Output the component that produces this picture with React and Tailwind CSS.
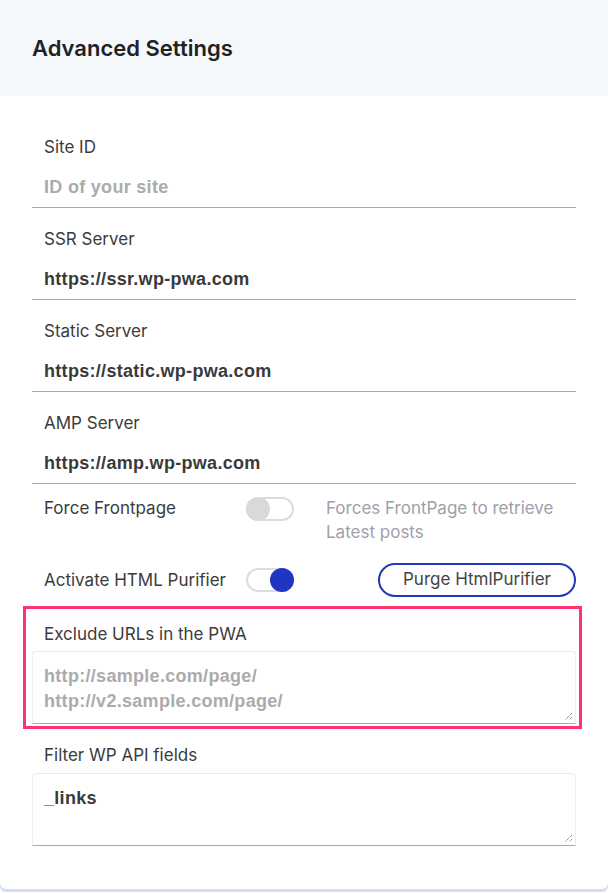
import React from "react";

const labelCls = "block text-[17px] leading-6 text-[#3b3b3b]";
const monoish = "font-['Liberation_Sans',Arial,sans-serif] font-bold text-[18px] tracking-[0.3px]";

function TextField({ label, value, placeholder }) {
  return (
    <div className="pt-[19px] border-b border-[#a8a8a8]">
      <div className="pl-3">
        <span className={labelCls}>{label}</span>
      </div>
      <div className={"pl-3 pt-4 pb-2 leading-6 " + monoish + " " + (value ? "text-[#3a3a3a]" : "text-[#ababab]")}>
        {value || placeholder}
      </div>
    </div>
  );
}

function Toggle({ on }) {
  return (
    <div className="relative h-6 w-12 rounded-full border-2 border-[#dcdcdc] bg-white">
      <span
        className={
          "absolute -top-[2px] h-6 w-6 rounded-full " +
          (on ? "right-[-2px] bg-[#1f36c4]" : "left-[-2px] bg-[#d9d9d9]")
        }
      />
    </div>
  );
}

function Area({ value, placeholder }) {
  return (
    <div className={"relative h-[73px] rounded-t-[4px] border border-[#ececec] border-b-[#a8a8a8] bg-white px-[11px] pt-[12px] leading-[25px] " + monoish}>
      {value ? (
        <div className="text-[#3a3a3a]">{value}</div>
      ) : (
        placeholder.map((l) => (
          <div key={l} className="text-[#ababab]">
            {l}
          </div>
        ))
      )}
      <svg className="absolute bottom-[2px] right-[2px]" width="9" height="9" viewBox="0 0 9 9">
        <path d="M8 1 L1 8 M8 5 L5 8" stroke="#555" strokeWidth="1" strokeDasharray="1 1" />
      </svg>
    </div>
  );
}

export default function App() {
  return (
    <div className="min-h-[893px] bg-white font-['Inter',sans-serif]">
      <div className="rounded-b-[6px] bg-white shadow-[0_3px_0_#d3ddf6]">
        <header className="flex h-24 items-center bg-[#f5f8fa] px-8">
          <h1 className="text-[22px] font-semibold text-[#1e2226]">Advanced Settings</h1>
        </header>

        <div className="px-8 pb-[43px]">
          <div className="pt-[20px]">
            <TextField label="Site ID" placeholder="ID of your site" />
          </div>
          <TextField label="SSR Server" value="https://ssr.wp-pwa.com" />
          <TextField label="Static Server" value="https://static.wp-pwa.com" />
          <TextField label="AMP Server" value="https://amp.wp-pwa.com" />

          <div className="mt-3 flex items-start">
            <span className={labelCls + " w-[214px] pl-3"}>Force Frontpage</span>
            <div className="pt-[1px]">
              <Toggle on={false} />
            </div>
            <p className="ml-8 text-[17px] leading-6 text-[#a0a0ab]">
              Forces FrontPage to retrieve
              <br />
              Latest posts
            </p>
          </div>

          <div className="mt-[19px] flex h-[34px] items-center">
            <span className={labelCls + " w-[214px] pl-3"}>Activate HTML Purifier</span>
            <Toggle on={true} />
            <button className="ml-auto h-[34px] w-[198px] rounded-full border-2 border-[#2237b9] text-[17px] text-[#444]">
              Purge HtmlPurifier
            </button>
          </div>

          <div className="ml-[-9px] mr-[-6px] mt-[9px] border-[3px] border-[#ff3370] pb-[2px] pl-[6px] pr-[3px] pt-[13px]">
            <span className={labelCls + " pl-3"}>Exclude URLs in the PWA</span>
            <div className="mt-[5px]">
              <Area placeholder={["http://sample.com/page/", "http://v2.sample.com/page/"]} />
            </div>
          </div>

          <div className="mt-[14px]">
            <span className={labelCls + " pl-3"}>Filter WP API fields</span>
            <div className="mt-[6px]">
              <Area value="_links" />
            </div>
          </div>
        </div>
      </div>
    </div>
  );
}
